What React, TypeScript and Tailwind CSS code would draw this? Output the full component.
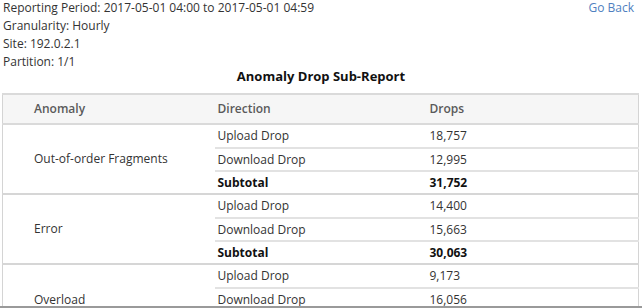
import React from "react";

type Group = { name: string; upload: string; download: string; subtotal: string };

const groups: Group[] = [
  { name: "Out-of-order Fragments", upload: "18,757", download: "12,995", subtotal: "31,752" },
  { name: "Error", upload: "14,400", download: "15,663", subtotal: "30,063" },
  { name: "Overload", upload: "9,173", download: "16,056", subtotal: "25,229" },
];

export default function App() {
  return (
    <div className="flex h-[308px] w-[642px] flex-col bg-white font-['Open_Sans',sans-serif] text-[12px] text-[#333]">
      <div className="h-[306px] overflow-hidden">
        <div className="-mt-[1px] flex justify-between px-[3px]">
          <div className="leading-[18px]">
            <div>Reporting Period: 2017-05-01 04:00 to 2017-05-01 04:59</div>
            <div>Granularity: Hourly</div>
            <div>Site: 192.0.2.1</div>
            <div>Partition: 1/1</div>
          </div>
          <a className="mr-[5px] leading-[18px] text-[#4f7fc0]">Go Back</a>
        </div>
        <h2 className="-mt-[4px] text-center text-[13px] font-bold leading-[18px] text-[#111]">Anomaly Drop Sub-Report</h2>
        <table className="ml-[2px] mt-[8px] w-[637px] table-fixed border-collapse border-x border-[#d4d4d4]">
          <thead>
            <tr className="h-[30px] border-y-2 border-[#dadada] bg-[#f6f6f6] text-left text-[#5a5a5a]">
              <th className="w-1/3 pl-[31px] font-semibold">Anomaly</th>
              <th className="w-1/3 pl-[3px] font-semibold">Direction</th>
              <th className="w-1/3 pl-[3px] font-semibold">Drops</th>
            </tr>
          </thead>
          <tbody>
            {groups.map((g) => (
              <React.Fragment key={g.name}>
                <tr className="h-[24px] border-t-2 border-[#d6d6d6]">
                  <td rowSpan={3} className="pl-[31px] align-middle">{g.name}</td>
                  <td className="pl-[3px]">Upload Drop</td>
                  <td className="pl-[3px]">{g.upload}</td>
                </tr>
                <tr className="h-[23px] border-t-2 border-[#e2e2e2]">
                  <td className="pl-[3px]">Download Drop</td>
                  <td className="pl-[3px]">{g.download}</td>
                </tr>
                <tr className="h-[23px] border-t-2 border-[#e2e2e2] font-bold text-[#111]">
                  <td className="pl-[3px]">Subtotal</td>
                  <td className="pl-[3px]">{g.subtotal}</td>
                </tr>
              </React.Fragment>
            ))}
          </tbody>
        </table>
      </div>
      <div className="h-[2px] bg-[#9a9a9a]" />
    </div>
  );
}
